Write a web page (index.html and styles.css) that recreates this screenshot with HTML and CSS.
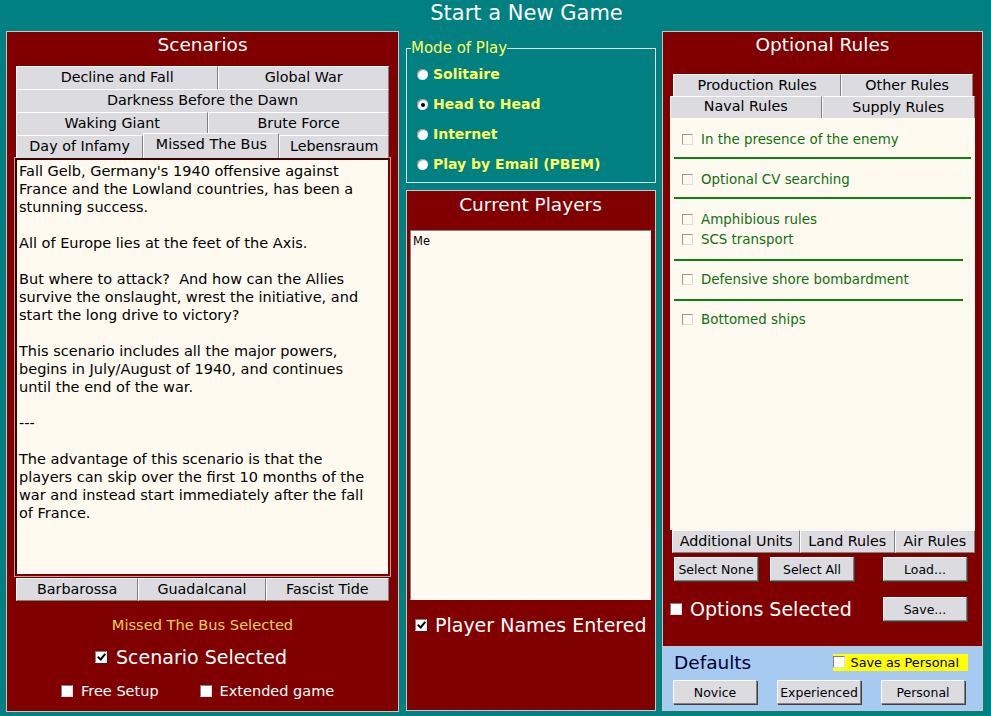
FILE: index.html
```html
<!DOCTYPE html>
<html lang="en">
<head>
    <meta charset="UTF-8">
    <title>Start a New Game</title>
    <link rel="stylesheet" href="styles.css">
</head>
<body>
    <h1 class="title">Start a New Game</h1>
    <div class="main">
        <!-- scenarios -->
        <div class="panel scenarios">
            <h2>Scenarios</h2>
            <div class="tabrow">
                <div class="tab" style="flex: 202">Decline and Fall</div>
                <div class="tab" style="flex: 170">Global War</div>
            </div>
            <div class="tabrow">
                <div class="tab" style="flex: 1">Darkness Before the Dawn</div>
            </div>
            <div class="tabrow">
                <div class="tab" style="flex: 192">Waking Giant</div>
                <div class="tab" style="flex: 180">Brute Force</div>
            </div>
            <div class="tabrow">
                <div class="tab" style="flex: 127">Day of Infamy</div>
                <div class="tab active" style="flex: 136">Missed The Bus</div>
                <div class="tab" style="flex: 109">Lebensraum</div>
            </div>
            <div class="story">
                <p>Fall Gelb, Germany's 1940 offensive against France and the Lowland countries, has been a stunning success.</p>
                <p>All of Europe lies at the feet of the Axis.</p>
                <p>But where to attack?&nbsp; And how can the Allies survive the onslaught, wrest the initiative, and start the long drive to victory?</p>
                <p>This scenario includes all the major powers, begins in July/August of 1940, and continues until the end of the war.</p>
                <p>---</p>
                <p>The advantage of this scenario is that the players can skip over the first 10 months of the war and instead start immediately after the fall of France.</p>
            </div>
            <div class="tabrow bottom">
                <div class="tab" style="flex: 122">Barbarossa</div>
                <div class="tab" style="flex: 127">Guadalcanal</div>
                <div class="tab" style="flex: 123">Fascist Tide</div>
            </div>
            <div class="chosen">Missed The Bus Selected</div>
            <label class="big-check scen-check"><span class="box checked"></span>Scenario Selected</label>
            <div class="extras">
                <label class="small-check"><span class="box white"></span>Free Setup</label>
                <label class="small-check"><span class="box white"></span>Extended game</label>
            </div>
        </div>

        <!-- middle column -->
        <div class="middle">
            <fieldset class="mode">
                <legend>Mode of Play</legend>
                <div class="radio"><span class="dot"></span>Solitaire</div>
                <div class="radio"><span class="dot on"></span>Head to Head</div>
                <div class="radio"><span class="dot"></span>Internet</div>
                <div class="radio"><span class="dot"></span>Play by Email (PBEM)</div>
            </fieldset>
            <div class="panel players">
                <h2>Current Players</h2>
                <div class="listbox">Me</div>
                <label class="big-check"><span class="box checked"></span>Player Names Entered</label>
            </div>
        </div>

        <!-- optional rules -->
        <div class="right">
            <div class="panel rules">
                <h2>Optional Rules</h2>
                <div class="rules-tabs">
                    <div class="tabrow back">
                        <div class="tab" style="flex: 168">Production Rules</div>
                        <div class="tab" style="flex: 131">Other Rules</div>
                    </div>
                    <div class="tabrow">
                        <div class="tab active" style="flex: 149">Naval Rules</div>
                        <div class="tab" style="flex: 151">Supply Rules</div>
                    </div>
                    <div class="rule-list">
                        <div class="rule"><span class="box flat"></span>In the presence of the enemy</div>
                        <div class="sep"></div>
                        <div class="rule"><span class="box flat"></span>Optional CV searching</div>
                        <div class="sep"></div>
                        <div class="rule"><span class="box flat"></span>Amphibious rules</div>
                        <div class="rule"><span class="box flat"></span>SCS transport</div>
                        <div class="sep short"></div>
                        <div class="rule"><span class="box flat"></span>Defensive shore bombardment</div>
                        <div class="sep short"></div>
                        <div class="rule"><span class="box flat"></span>Bottomed ships</div>
                    </div>
                    <div class="tabrow bottom">
                        <div class="tab" style="flex: 127">Additional Units</div>
                        <div class="tab" style="flex: 93">Land Rules</div>
                        <div class="tab" style="flex: 79">Air Rules</div>
                    </div>
                </div>
                <div class="btnrow">
                    <button class="btn">Select None</button>
                    <button class="btn">Select All</button>
                    <button class="btn push">Load...</button>
                </div>
                <div class="btnrow opts">
                    <label class="big-check"><span class="box white"></span>Options Selected</label>
                    <button class="btn push">Save...</button>
                </div>
            </div>
            <div class="defaults">
                <div class="def-head">
                    <span class="def-title">Defaults</span>
                    <label class="personal"><span class="box white"></span>Save as Personal</label>
                </div>
                <div class="def-btns">
                    <button class="btn">Novice</button>
                    <button class="btn">Experienced</button>
                    <button class="btn">Personal</button>
                </div>
            </div>
        </div>
    </div>
</body>
</html>
```

FILE: styles.css
```css
body {
    margin: 0;
    background-color: #008080;
    font-family: "DejaVu Sans", Verdana, sans-serif;
    color: #fff;
    width: 991px;
    height: 716px;
    overflow: hidden;
}

.title {
    margin: 0;
    height: 31px;
    line-height: 27px;
    font-size: 21px;
    font-weight: normal;
    text-align: center;
    padding-left: 62px;
    color: #fff;
}

.main {
    display: flex;
    padding-left: 6px;
}

.panel {
    background: #800000;
    border: 1px solid #c8c8c8;
    box-sizing: border-box;
}

.panel h2 {
    margin: 0;
    font-size: 18.5px;
    font-weight: normal;
    text-align: center;
    line-height: 26px;
}

/* tabs */
.tabrow {
    display: flex;
    height: 23px;
}

.tab {
    background: #dcdce0;
    color: #000;
    font-size: 14.3px;
    text-align: center;
    line-height: 21px;
    border-top: 1px solid #fff;
    border-left: 1px solid #fff;
    border-right: 1px solid #808080;
    box-sizing: border-box;
    white-space: nowrap;
    overflow: hidden;
}

.tab.active {
    margin-top: -2px;
    height: 25px;
    line-height: 20px;
    position: relative;
    border-bottom: none;
}

/* scenarios */
.scenarios {
    width: 393px;
    height: 681px;
    padding: 0 9px 0 9px;
}

.scenarios h2 {
    height: 34px;
    line-height: 26px;
}

.story {
    height: 418px;
    margin-left: -1px;
    margin-right: -1px;
    background: #fffaf0;
    border: 2px solid #800000;
    border-top-color: #400000;
    border-left-color: #400000;
    box-shadow: 0 0 0 1px #c0a0a0;
    box-sizing: border-box;
    color: #000;
    font-size: 14.5px;
    line-height: 18px;
    padding: 2px 12px 1px 2px;
    overflow: hidden;
}

.story p {
    margin: 0 0 18px 0;
}

.tabrow.bottom .tab {
    border-bottom: 1px solid #808080;
    line-height: 20px;
}

.scenarios .tabrow.bottom {
    margin-top: 2px;
}

.chosen {
    color: #f0d050;
    font-size: 14.6px;
    text-align: center;
    margin-top: 15px;
    line-height: 18px;
}

.box {
    display: inline-block;
    flex: none;
    width: 11px;
    height: 11px;
    box-sizing: border-box;
    background: #fff;
    position: relative;
    vertical-align: middle;
}

.box.checked {
    border: 1px solid #808080;
    border-right-color: #fff;
    border-bottom-color: #fff;
}

.box.checked::after {
    content: "";
    position: absolute;
    left: 3px;
    top: 0px;
    width: 3px;
    height: 6px;
    border: solid #000;
    border-width: 0 2px 2px 0;
    transform: rotate(40deg);
}

.box.white {
    width: 12px;
    height: 12px;
    border: 1px solid #808080;
    border-right-color: #e0e0e0;
    border-bottom-color: #e0e0e0;
}

.box.flat {
    border: 1px solid #999;
    border-right-color: #ddd;
    border-bottom-color: #ddd;
    background: #fffaf0;
}

.big-check {
    display: flex;
    align-items: center;
    gap: 8px;
    font-size: 19px;
    line-height: 22px;
}

.big-check .box {
    width: 12px;
    height: 12px;
}

.scen-check {
    margin: 12px 0 0 79px;
    gap: 9px;
}

.extras {
    display: flex;
    margin-top: 14px;
    margin-left: 45px;
}

.small-check {
    display: flex;
    align-items: center;
    gap: 8px;
    font-size: 14.5px;
    line-height: 18px;
}

.small-check + .small-check {
    margin-left: 41px;
}

/* middle */
.middle {
    width: 250px;
    margin: 0 6px 0 7px;
    display: flex;
    flex-direction: column;
}

.mode {
    margin: 8px 0 0 0;
    height: 144px;
    box-sizing: border-box;
    border: 1px solid #e0e0e0;
    padding: 7px 0 0 10px;
    color: #ffff60;
    font-weight: bold;
    font-size: 14px;
}

.mode legend {
    padding: 0;
    margin-left: -6px;
    font-weight: normal;
    font-size: 15px;
    line-height: 18px;
}

.radio {
    display: flex;
    align-items: center;
    gap: 5px;
    height: 30px;
    margin-top: -6px;
    margin-bottom: 6px;
}

.radio:first-of-type {
    margin-top: -5px;
}

.dot {
    width: 11px;
    height: 11px;
    border-radius: 50%;
    background: #fff;
    box-shadow: inset 1px 1px 1px #888;
    position: relative;
}

.dot.on::after {
    content: "";
    position: absolute;
    left: 4px;
    top: 4px;
    width: 4px;
    height: 4px;
    border-radius: 50%;
    background: #000;
}

.players {
    margin-top: 7px;
    height: 521px;
    padding: 0 4px 0 3px;
}

.players h2 {
    height: 39px;
    line-height: 27px;
}

.listbox {
    height: 370px;
    background: #fffaf0;
    border: 1px solid #808080;
    border-right-color: #fff;
    border-bottom-color: #fff;
    box-sizing: border-box;
    color: #000;
    font-size: 11.5px;
    padding: 2px 2px;
    line-height: 16px;
}

.players .big-check {
    margin: 14px 0 0 5px;
}

/* right */
.right {
    width: 321px;
    display: flex;
    flex-direction: column;
}

.rules {
    height: 616px;
    padding: 0 7px 0 7px;
}

.rules h2 {
    height: 42px;
    line-height: 26px;
}

.rules-tabs {
    width: 305px;
}

.rules-tabs .tabrow {
    height: 22px;
}

.rules-tabs .tabrow.back {
    padding: 0 2px 0 3px;
}

.rules-tabs .tab {
    line-height: 21px;
}

.rules-tabs .tab.active {
    margin-top: 0;
    height: 22px;
    line-height: 19px;
}

.rule-list {
    height: 412px;
    background: #fffaf0;
    padding: 11px 4px 0 4px;
    box-sizing: border-box;
}

.rule {
    display: flex;
    align-items: center;
    gap: 8px;
    color: #107010;
    font-size: 13.4px;
    height: 20px;
    padding-left: 8px;
}

.sep {
    height: 2px;
    background: #108010;
    margin: 8px 0 10px 0;
}

.sep.short {
    margin-right: 8px;
    margin-top: 10px;
    margin-bottom: 8px;
}

.rules-tabs .tabrow.bottom {
    height: 23px;
    padding-left: 2px;
}

.btn {
    font-family: "DejaVu Sans", Verdana, sans-serif;
    font-size: 12.5px;
    color: #000;
    background: #dcdce0;
    border: 1px solid #fff;
    border-right-color: #808080;
    border-bottom-color: #808080;
    box-shadow: 1px 1px 0 #404040;
    width: 84px;
    height: 24px;
    padding: 0;
}

.btnrow {
    display: flex;
    gap: 12px;
    margin-top: 4px;
    padding-left: 4px;
}

.btnrow .push {
    margin-left: auto;
    margin-right: 8px;
}

.btnrow.opts {
    padding-left: 0;
    margin-top: 16px;
    align-items: center;
}

.defaults {
    height: 64px;
    background: #a6caf0;
    border: 1px solid #c8c8c8;
    border-top: none;
    box-sizing: border-box;
    padding: 3px 10px 0 10px;
}

.def-head {
    display: flex;
    align-items: center;
    justify-content: space-between;
    height: 24px;
}

.def-title {
    color: #000030;
    font-size: 18.5px;
    margin-left: 1px;
}

.personal {
    display: flex;
    align-items: center;
    gap: 6px;
    background: #ffff00;
    color: #000;
    font-size: 12.8px;
    height: 17px;
    padding-right: 9px;
    margin-right: 4px;
}

.personal .box {
    background: #fff;
}

.def-btns {
    display: flex;
    justify-content: space-between;
    margin-top: 6px;
    padding-right: 7px;
}
```
